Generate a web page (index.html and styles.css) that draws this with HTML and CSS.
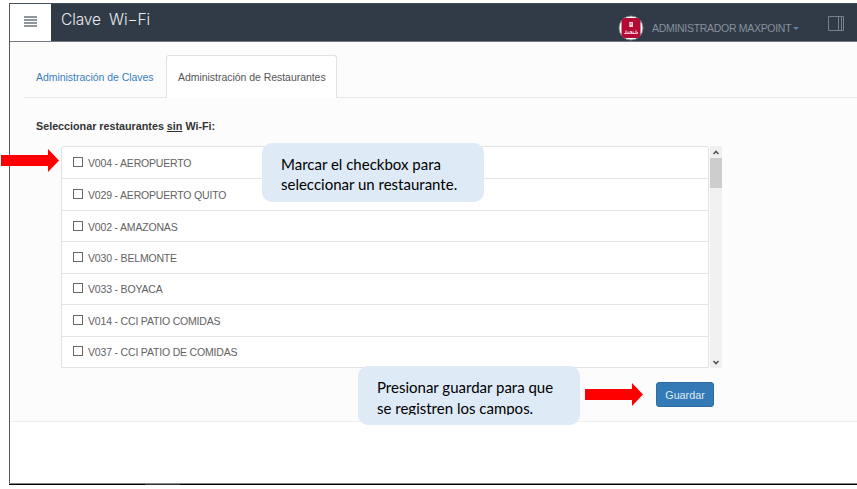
FILE: index.html
```html
<!DOCTYPE html>
<html lang="es">
<head>
<meta charset="utf-8">
<title>Clave Wi-Fi</title>
<link rel="stylesheet" href="styles.css">
</head>
<body>
<div class="frame">
  <header class="topbar">
    <button class="menu" aria-label="Menú"><i></i><i></i><i></i><i></i></button>
    <h1><span class="t1">Clave</span><span class="t2">Wi−Fi</span></h1>
    <svg class="avatar" viewBox="0 0 26 26"><circle cx="13" cy="13" r="12" fill="#fff" stroke="#708a84" stroke-width="1"/><rect x="3.5" y="3" width="19" height="20" rx="4" fill="#b50935"/><path d="M11.3 7h3.600v5h-3.600z" fill="#f7dbe2"/><path d="M12 9h2" stroke="#b50935" stroke-width=".7"/><path d="M8 15.500v3H6.500M10 16.500v2M12 18.500v-2h1.500v2M15 16.500v2h1.500M18 15.500v3M19.500 17v1.500" fill="none" stroke="#f7dbe2" stroke-width="1"/><path d="M6.500 18.500h13" stroke="#f7dbe2" stroke-width=".7"/></svg>
    <span class="user">ADMINISTRADOR MAXPOINT</span><i class="caret"></i>
    <svg class="panel" viewBox="0 0 17 16"><path d="M.5.5h15v14H.5zM10.500.500v14M13.500.500v14" fill="none" stroke="#76818c"/></svg>
  </header>
  <main class="content">
    <nav class="tabs"><a class="tab">Administración de Claves</a><a class="tab active">Administración de Restaurantes</a></nav>
    <p class="prompt">Seleccionar restaurantes <u>sin</u> Wi-Fi:</p>
    <div class="picker">
      <ul class="list">
        <li><i class="box"></i>V004 - AEROPUERTO</li>
        <li><i class="box"></i>V029 - AEROPUERTO QUITO</li>
        <li><i class="box"></i>V002 - AMAZONAS</li>
        <li><i class="box"></i>V030 - BELMONTE</li>
        <li><i class="box"></i>V033 - BOYACA</li>
        <li><i class="box"></i>V014 - CCI PATIO COMIDAS</li>
        <li><i class="box"></i>V037 - CCI PATIO DE COMIDAS</li>
      </ul>
      <div class="scroll">
        <svg viewBox="0 0 12 12"><path d="M3.500 8 6 5.500 8.500 8" /></svg>
        <div class="thumb"></div>
        <svg class="down" viewBox="0 0 12 12"><path d="M3.500 5 6 7.500 8.500 5" /></svg>
      </div>
    </div>
    <div class="actions"><button class="save">Guardar</button></div>
  </main>
</div>
<div class="taskbar"><i></i></div>
<div class="callout first"><span>Marcar el checkbox para</span><br><span>seleccionar un restaurante.</span></div>
<div class="callout second"><div class="clip"><span>Presionar guardar para que</span><br><span>se registren los campos.</span></div></div>
<svg class="arrow a1" viewBox="0 0 58 23"><path d="M0 6h47V0l11 11.500L47 23v-6H0z" fill="#f00"/></svg>
<svg class="arrow a2" viewBox="0 0 58 23"><path d="M0 6h47V0l11 11.500L47 23v-6H0z" fill="#f00"/></svg>
</body>
</html>
```
FILE: styles.css
```css
* { box-sizing: border-box; }
body { margin: 0; padding: 3px 0 0 9px; height: 489px; overflow: hidden; position: relative; background: #fff; font: 11px/14px "Liberation Sans", Arial, sans-serif; color: #555; }
.frame { height: 480px; border-left: 1px solid #555961; }
.topbar { height: 39px; display: flex; background: #313b48; border-top: 1px solid #46505b; border-bottom: 1px solid #727881; }
.menu { width: 41px; height: 37px; border: 0; background: #fff; padding: 12px 13px 0 14px; display: flex; flex-direction: column; gap: 1px; }
.menu i { height: 2px; width: 13px; background: #8e969e; flex: none; }
h1 { margin: 6px 0 0 10px; font: 300 15.5px/20px Inter, sans-serif; color: #e9ebed; display: flex; width: 557px; }
.t1 { width: 48px; letter-spacing: -.1px; }
.t2 { letter-spacing: -.1px; }
.avatar { width: 26px; height: 26px; margin-top: 11px; flex: none; }
.user { margin: 17px 0 0 8px; font-size: 10.5px; color: #87909a; white-space: nowrap; width: 137px; letter-spacing: -.3px; }
.caret { margin: 23px 0 0 4px; width: 6px; height: 3px; border: 3px solid transparent; border-top-color: #647fa5; border-bottom: 0; }
.panel { width: 17px; height: 16px; margin: 12px 0 0 29px; flex: none; }
.content { height: 380px; background: #fcfcfc; border-bottom: 1px solid #eee; padding: 13px 0 0 14px; }
.tabs { height: 43px; display: flex; border-bottom: 1px solid #e6e6e6; }
.tab { color: #3a7fbe; width: 142px; height: 43px; padding: 14px 0 0 11px; white-space: nowrap; border: 1px solid transparent; border-bottom: 0; font-size: 10.5px; letter-spacing: -.04px; }
.tab.active { width: 171px; color: #555; background: #fff; border-color: #e2e2e2; border-radius: 3px 3px 0 0; padding-left: 11px; }
.prompt { margin: 21px 0 0 12px; font-weight: bold; font-size: 10.75px; color: #333; }
.picker { margin: 13px 0 0 37px; width: 661px; height: 222px; display: flex; }
.list { list-style: none; margin: 0; padding: 0; width: 648px; height: 222px; border: 1px solid #e2e2e2; border-radius: 3px 3px 0 0; background: #fff; display: grid; grid-template-rows: repeat(7, 1fr); }
.list li { display: flex; align-items: center; padding: 1px 0 0 11px; color: #626262; white-space: nowrap; font-size: 10.5px; letter-spacing: -.18px; }
.list li + li { border-top: 1px solid #e5e5e5; }
.box { width: 10px; height: 10px; border: 1px solid #686868; margin: -2px 5px 0 0; }
.scroll { width: 12px; margin-left: 1px; background: #f0f0f0; display: flex; flex-direction: column; }
.scroll svg { width: 12px; height: 12px; fill: none; stroke: #555; stroke-width: 1.6; }
.scroll .down { margin-top: auto; }
.thumb { height: 30px; background: #cdcdcd; }
.actions { padding: 14px 0 0 632px; }
.save { width: 58px; height: 25px; border: 1px solid #2e6da4; border-radius: 3px; background: #337ab7; color: #dfebf5; font: 10.75px "Liberation Sans", Arial, sans-serif; padding: 0; }
.taskbar { height: 2px; background: #000; border-top: 1px solid #85878a; }
.taskbar i { display: block; width: 35px; height: 1px; margin-left: 136px; background: #343438; }
.callout { position: absolute; width: 222px; height: 59px; border-radius: 10px; background: #deeaf6; color: #000; font: 15px/20px Lato, sans-serif; padding: 11px 0 0 19px; white-space: nowrap; }
.first { left: 262px; top: 143px; }
.second { left: 358px; top: 366px; line-height: 21px; }
.clip { height: 38px; overflow: hidden; }
.arrow { position: absolute; width: 58px; height: 23px; }
.a1 { left: 1px; top: 149px; }
.a2 { left: 585px; top: 383px; }
```
